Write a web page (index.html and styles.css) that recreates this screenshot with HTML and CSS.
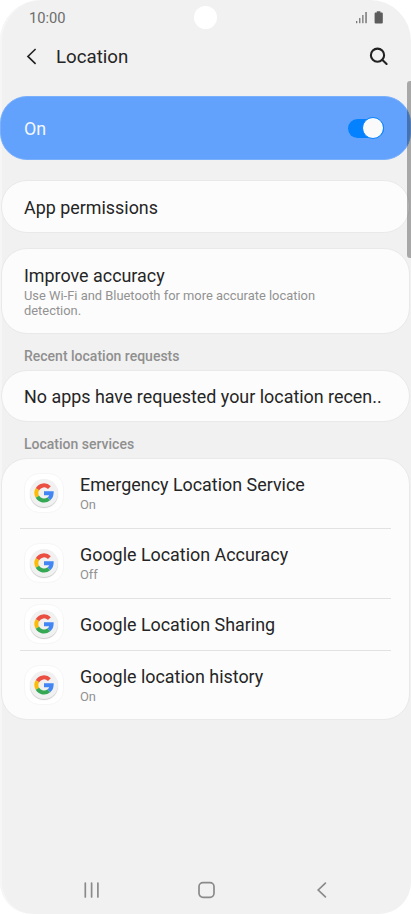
FILE: index.html
```html
<!DOCTYPE html>
<html lang="en">
<head>
  <meta charset="UTF-8">
  <meta name="viewport" content="width=device-width, initial-scale=1.0">
  <title>Location</title>
  <link rel="stylesheet" href="styles.css">
</head>
<body>

  <svg class="defs" width="0" height="0">
    <symbol id="google" viewBox="0 0 20 20">
      <g fill="none" stroke-width="4">
        <path stroke="#ea4f41" d="M3.4 6.2A7.6 7.6 0 0 1 15.4 4.6"/>
        <path stroke="#fbbc05" d="M3.4 13.8A7.6 7.6 0 0 1 3.4 6.2"/>
        <path stroke="#34a853" d="M14.9 15.8A7.6 7.6 0 0 1 3.4 13.8"/>
        <path stroke="#4285f4" d="M10 10.2h7.6A7.6 7.6 0 0 1 14.9 15.8"/>
      </g>
    </symbol>
  </svg>

  <div class="screen">
    <div class="camera"></div>
    <div class="scrollbar"></div>

    <div class="status-bar">
      <span class="time">10:00</span>
      <svg class="status-icons" width="28" height="14" viewBox="0 0 28 14">
        <g fill="#777">
          <rect x="0" y="10" width="1.3" height="2.2"/>
          <rect x="3.1" y="7" width="1.3" height="5.2"/>
          <rect x="6.2" y="4" width="1.3" height="8.2"/>
          <rect x="9.3" y="1" width="1.5" height="11.2"/>
        </g>
        <path fill="#5c5c5c" d="M20.8.2h3.6v1.2h1.4q1 0 1 1v9q0 1-1 1h-6.2q-1 0-1-1v-9q0-1 1-1h1.2z"/>
      </svg>
    </div>

    <header class="header">
      <svg class="back" width="11" height="17" viewBox="0 0 11 17"><path d="M9.6 1 1.9 8.4l7.7 7.4"/></svg>
      <h1>Location</h1>
      <svg class="search" width="20" height="20" viewBox="0 0 20 20"><circle cx="8.5" cy="8.2" r="6.6"/><path d="m13.2 12.8 4.4 4.2"/></svg>
    </header>

    <main>
      <div class="master">
        <span>On</span>
        <div class="toggle"><div class="knob"></div></div>
      </div>

      <div class="card permissions">
        <p class="title">App permissions</p>
      </div>

      <div class="card accuracy">
        <p class="title">Improve accuracy</p>
        <p class="sub">Use Wi-Fi and Bluetooth for more accurate location<br>detection.</p>
      </div>

      <h2 class="recent-label">Recent location requests</h2>
      <div class="card recent">
        <p class="title">No apps have requested your location recen..</p>
      </div>

      <h2 class="services-label">Location services</h2>
      <div class="card services">
        <div class="row">
          <div class="app-icon"><div class="disc"><svg width="20" height="20"><use href="#google"/></svg></div></div>
          <div>
            <p class="title">Emergency Location Service</p>
            <p class="sub">On</p>
          </div>
        </div>
        <div class="row">
          <div class="app-icon"><div class="disc"><svg width="20" height="20"><use href="#google"/></svg></div></div>
          <div>
            <p class="title">Google Location Accuracy</p>
            <p class="sub">Off</p>
          </div>
        </div>
        <div class="row short">
          <div class="app-icon"><div class="disc"><svg width="20" height="20"><use href="#google"/></svg></div></div>
          <p class="title">Google Location Sharing</p>
        </div>
        <div class="row">
          <div class="app-icon"><div class="disc"><svg width="20" height="20"><use href="#google"/></svg></div></div>
          <div>
            <p class="title">Google location history</p>
            <p class="sub">On</p>
          </div>
        </div>
      </div>
    </main>

    <nav class="nav-bar">
      <svg width="18" height="18" viewBox="0 0 18 18"><path d="M2.3 2v14M8.6 2v14M14.9 2v14"/></svg>
      <svg width="18" height="18" viewBox="0 0 18 18"><rect x="1" y="1.7" width="15" height="14.6" rx="4"/></svg>
      <svg width="18" height="18" viewBox="0 0 18 18"><path d="M13.4 2.2 6.2 9l7.2 6.8"/></svg>
    </nav>
  </div>

</body>
</html>
```
FILE: styles.css
```css
* {
  box-sizing: border-box;
}

body {
  margin: 0;
  background-color: #fff;
  font-family: Roboto, sans-serif;
  color: #252525;
}

h1, h2, p {
  margin: 0;
  font-weight: 400;
}

svg {
  display: block;
  flex: none;
}

.defs {
  position: absolute;
}

.screen {
  position: relative;
  display: flex;
  flex-direction: column;
  width: 411px;
  height: 914px;
  border-radius: 41px 41px 32px 32px;
  background-color: #f1f1f1;
  box-shadow: inset 2px 0 0 #f6f6f6;
  overflow: hidden;
}

.camera {
  position: absolute;
  top: 6px;
  left: 194px;
  width: 23px;
  height: 23px;
  border-radius: 50%;
  background-color: #fff;
}

.scrollbar {
  position: absolute;
  z-index: 1;
  top: 81px;
  right: 0;
  width: 4px;
  height: 177px;
  border-radius: 3px 0 0 3px;
  background-color: rgba(0, 0, 0, 0.3);
}

.status-bar {
  display: flex;
  justify-content: space-between;
  align-items: center;
  height: 36px;
  padding: 0 27px 0 29px;
}

.time {
  font-size: 14.7px;
  color: #6c6c6c;
}

.header {
  display: flex;
  align-items: center;
  height: 41px;
  padding: 0 22px 0 26px;
}

.header h1 {
  flex: 1;
  margin-left: 19px;
  padding-top: 1px;
  font-size: 18.7px;
}

.header svg {
  fill: none;
  stroke: #222;
}

.back {
  stroke-width: 1.6;
}

.search {
  stroke-width: 2.1;
  stroke-linecap: round;
}

.master {
  display: flex;
  justify-content: space-between;
  align-items: center;
  height: 64px;
  margin-top: 19.4px;
  padding: 0 26px 0 23px;
  border: 1px solid #79affb;
  border-radius: 27px;
  background-color: #62a2fc;
  color: #f4f8ff;
  font-size: 17.9px;
}

.toggle {
  display: flex;
  align-items: center;
  justify-content: flex-end;
  width: 36px;
  height: 19px;
  border-radius: 10px;
  background-color: #0381fe;
}

.knob {
  flex: none;
  width: 22px;
  height: 22px;
  border: 1px solid #0381fe;
  border-radius: 50%;
  background-color: #fafafa;
}

.card {
  margin: 0 1px 0 0.5px;
  padding: 0 22.5px;
  border: 1px solid #e9e9e9;
  border-radius: 26px;
  background-color: #fcfcfc;
}

.title {
  font-size: 17.9px;
  line-height: 22px;
  white-space: nowrap;
}

.sub {
  font-size: 12.9px;
  line-height: 15.5px;
  color: #929292;
}

.permissions {
  height: 53px;
  margin-top: 19.6px;
  padding-top: 16px;
}

.accuracy {
  height: 86px;
  margin-top: 15px;
  padding-top: 16px;
}

.accuracy .sub {
  margin-top: 1px;
}

h2 {
  padding-left: 24px;
  font-size: 14px;
  font-weight: 500;
  line-height: 16px;
  color: #8f8f8f;
}

.recent-label {
  padding-top: 14px;
  padding-bottom: 6px;
}

.recent {
  height: 52px;
  padding-top: 15px;
}

.services-label {
  padding-top: 14px;
  padding-bottom: 6px;
}

.services {
  padding: 0 18.5px;
}

.row {
  display: flex;
  align-items: center;
  gap: 16px;
  height: 70px;
  padding-left: 4px;
  border-bottom: 1px solid #e2e2e2;
}

.row .sub {
  margin-top: 1px;
}

.row.short {
  height: 52px;
}

.row.short .title {
  padding-top: 1px;
}

.row:last-child {
  height: 68px;
  border-bottom: none;
}

.app-icon {
  display: flex;
  align-items: center;
  justify-content: center;
  width: 40px;
  height: 40px;
  border: 1px solid #f6f6f6;
  border-radius: 15px;
  background-color: #fff;
}

.row:first-child {
  padding-bottom: 1px;
}

.disc {
  display: flex;
  align-items: center;
  justify-content: center;
  width: 28px;
  height: 28px;
  border-radius: 50%;
  background-color: #f1f1f1;
  box-shadow: 0 1px 1px #ccc;
}

.nav-bar {
  display: flex;
  justify-content: space-between;
  height: 18px;
  margin: auto 81px 15px 83px;
}

.nav-bar svg {
  fill: none;
  stroke: #8a8a8a;
  stroke-width: 1.7;
  stroke-linecap: round;
}
```
